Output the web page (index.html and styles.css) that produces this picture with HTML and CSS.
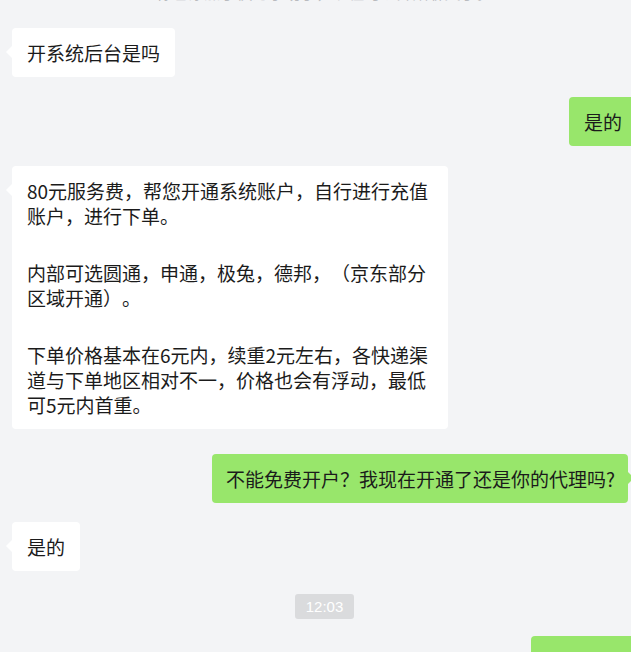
FILE: index.html
```html
<!DOCTYPE html>
<html>

<head>
	<meta charset="utf-8">
	<title>聊天记录</title>
	<link rel="stylesheet" href="styles.css">
</head>

<body>

	<div class="chat">
		<div class="sys">你已添加了快递小助手，现在可以开始聊天了。</div>

		<div class="msg msg-in msg-first">
			<div class="bubble">开系统后台是吗</div>
		</div>

		<div class="msg msg-out">
			<div class="bubble">是的</div>
		</div>

		<div class="msg msg-in">
			<div class="bubble bubble-long">
				<p>80元服务费，帮您开通系统账户，自行进行充值账户，进行下单。</p>
				<p>内部可选圆通，申通，极兔，德邦，（京东部分区域开通）。</p>
				<p>下单价格基本在6元内，续重2元左右，各快递渠道与下单地区相对不一，价格也会有浮动，最低可5元内首重。</p>
			</div>
		</div>

		<div class="msg msg-out msg-gap">
			<div class="bubble bubble-wide">不能免费开户？我现在开通了还是你的代理吗?</div>
		</div>

		<div class="msg msg-in msg-tight">
			<div class="bubble">是的</div>
		</div>

		<div class="time"><span>12:03</span></div>

		<div class="msg msg-out msg-last">
			<div class="bubble">我也要办</div>
		</div>
	</div>

</body>

</html>
```

FILE: styles.css
```css
html,
body {
	margin: 0;
	padding: 0;
}

body {
	background: #f3f4f6;
	font-family: "Noto Sans CJK SC", "Liberation Sans", sans-serif;
	color: #1b1b1b;
	overflow: hidden;
}

p {
	margin: 0;
}

.chat {
	padding: 0 0 0 12px;
	margin-right: -6px;
}

/* 顶部系统提示，只露出一点 */
.sys {
	margin-top: -18px;
	height: 20px;
	line-height: 20px;
	font-size: 16px;
	color: #b9bbbf;
	text-align: center;
}

.msg {
	display: flex;
	margin-top: 20px;
}

.msg-first {
	margin-top: 26px;
}

.msg-gap {
	margin-top: 25px;
}

.msg-tight {
	margin-top: 19px;
}

.msg-last {
	margin-top: 17px;
}

.msg-out {
	justify-content: flex-end;
}

.bubble {
	position: relative;
	box-sizing: border-box;
	padding: 12px 15px;
	font-size: 19px;
	line-height: 25px;
	border-radius: 4px;
	background: #fff;
	text-spacing-trim: space-all;
}

.msg-out .bubble {
	background: #98e66b;
}

/* 气泡的小三角 */
.bubble::before {
	content: "";
	position: absolute;
	top: 18px;
	width: 0;
	height: 0;
	border-top: 6px solid transparent;
	border-bottom: 6px solid transparent;
}

.msg-in .bubble::before {
	left: -6px;
	border-right: 6px solid #fff;
}

.msg-out .bubble::before {
	right: -6px;
	border-left: 6px solid #98e66b;
}

.bubble-long {
	max-width: 436px;
}

.bubble-long p + p {
	margin-top: 32px;
}

.bubble-wide {
	margin-right: 9px;
	padding: 12px 13px 12px 14px;
}

.time {
	display: flex;
	justify-content: center;
	margin-top: 23px;
}

.time span {
	height: 25px;
	line-height: 25px;
	padding: 0 11px;
	border-radius: 3px;
	background: #dadbdd;
	color: #fff;
	font-family: "Liberation Sans", sans-serif;
	font-size: 15px;
}
```
